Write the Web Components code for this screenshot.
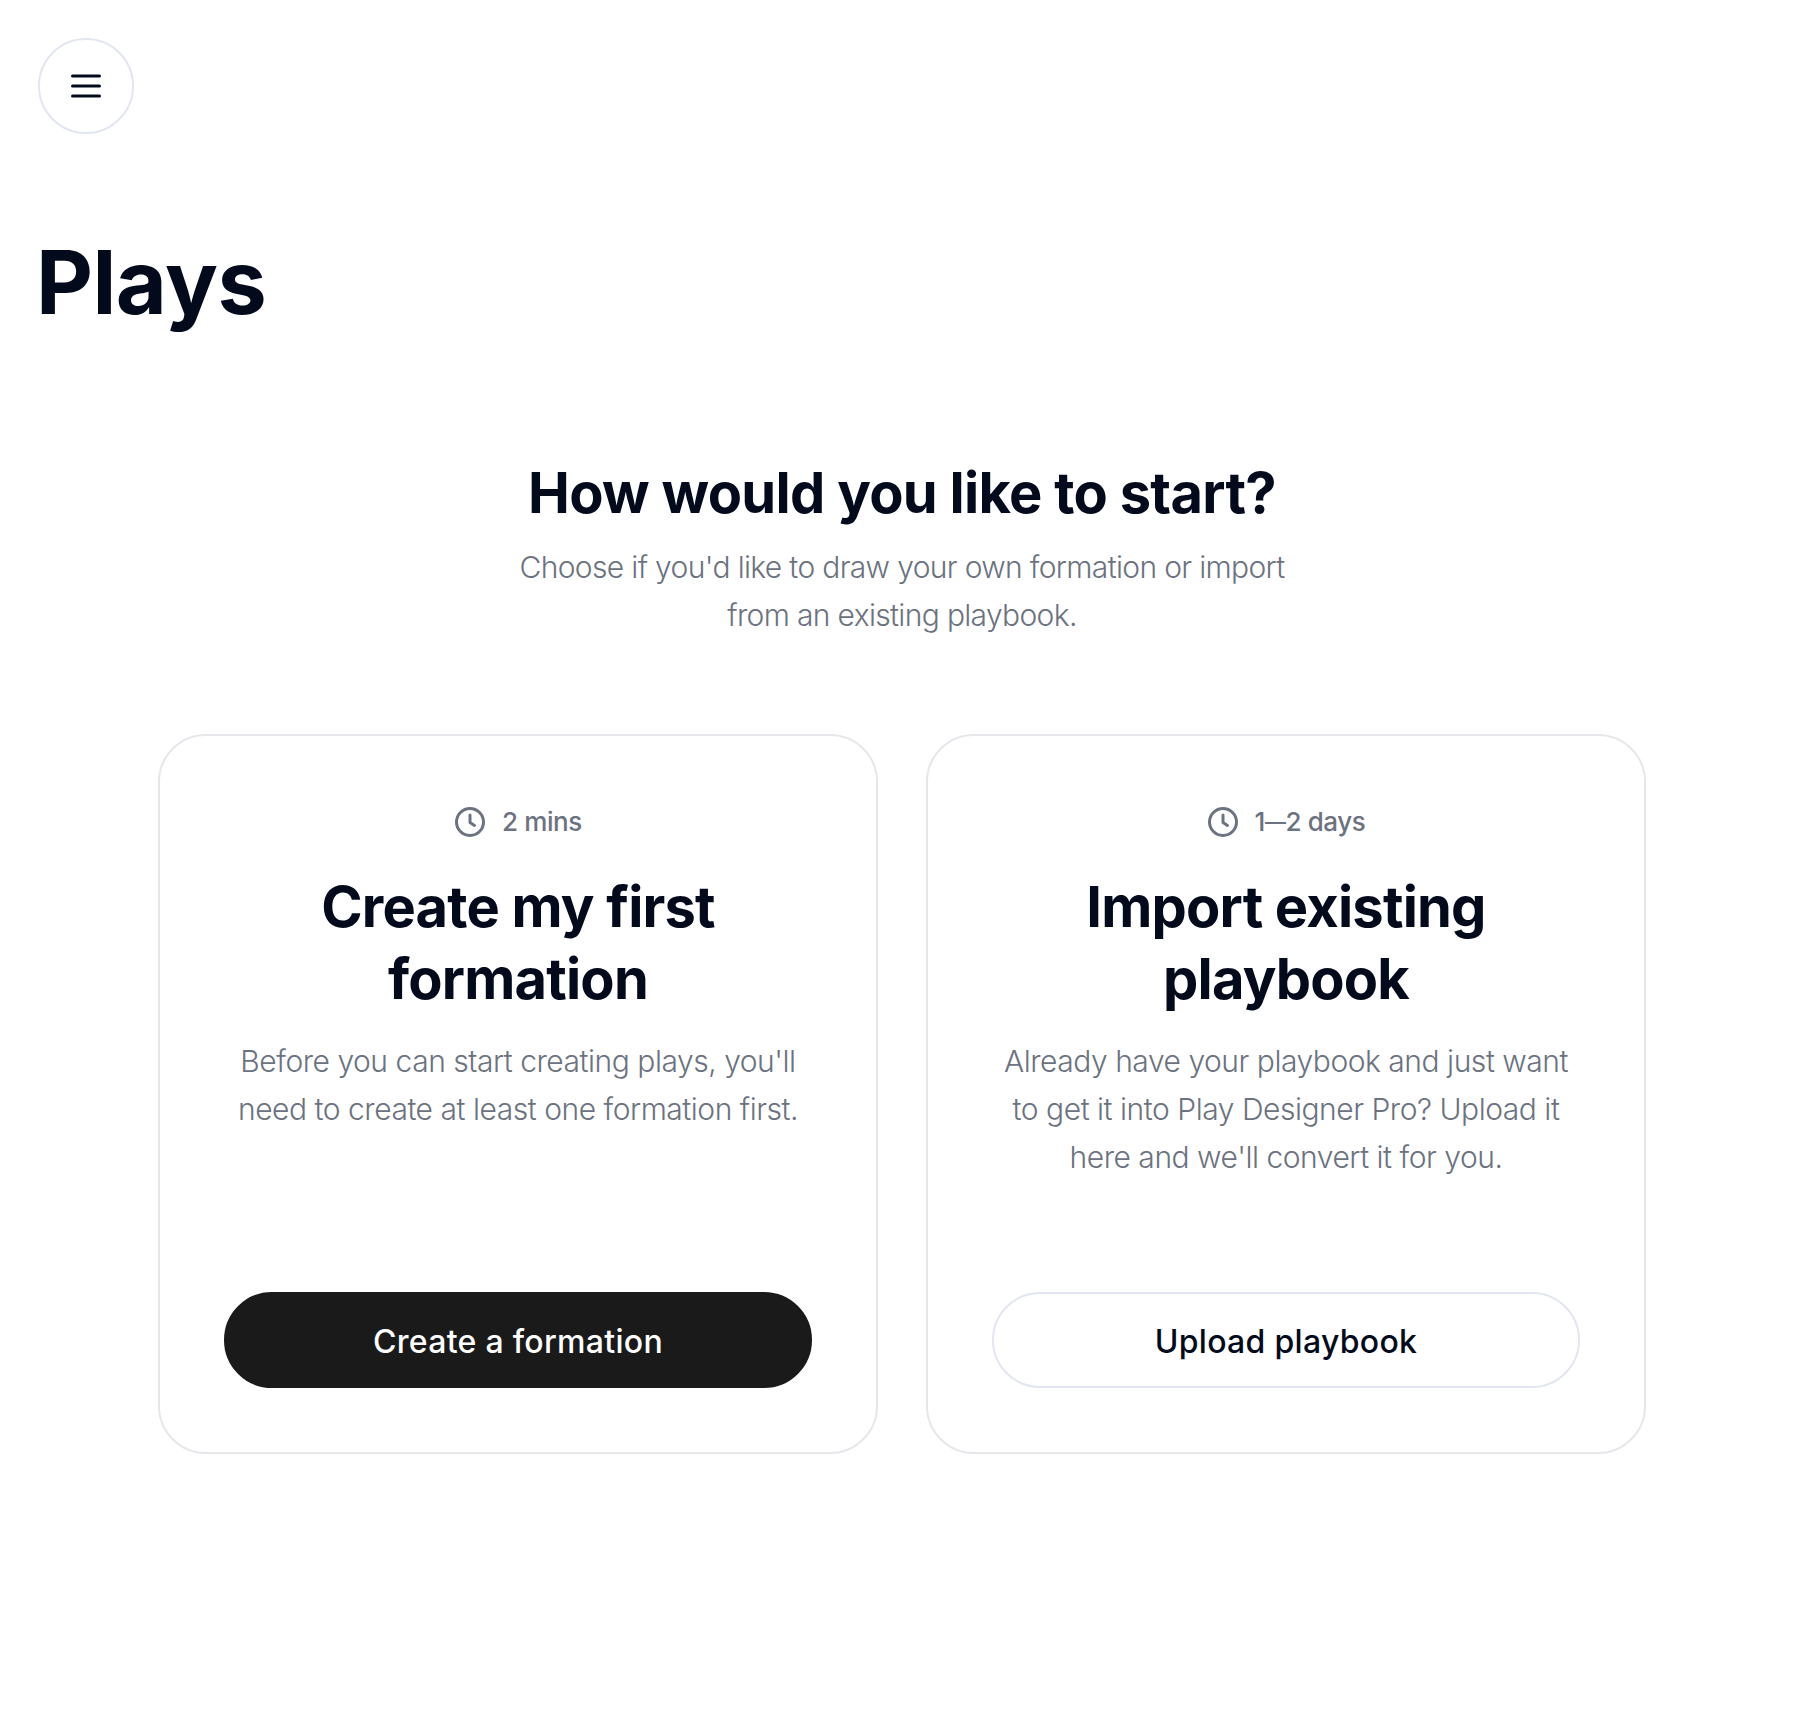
<!DOCTYPE html>
<html lang="en">
<head>
<meta charset="utf-8">
<title>Plays</title>
<style>
  html, body { margin: 0; background: #fff; }
  body { font-family: Inter, "Liberation Sans", sans-serif; color: #030a1c; }
</style>
</head>
<body>
<plays-page>
  <start-card time="2 mins" heading="Create my first formation" action="Create a formation" primary>
    Before you can start creating plays, you'll need to create at least one formation first.
  </start-card>
  <start-card time="1—2 days" heading="Import existing playbook" action="Upload playbook">
    Already have your playbook and just want to get it into Play Designer Pro? Upload it here and we'll convert it for you.
  </start-card>
</plays-page>

<script>
class MenuButton extends HTMLElement {
    constructor() {
        super();
        this.attachShadow({ mode: 'open' });
        this.shadowRoot.innerHTML = `
            <style>
                :host { display: block; width: 96px; height: 96px; }
                button {
                    width: 100%;
                    height: 100%;
                    padding: 0;
                    display: flex;
                    align-items: center;
                    justify-content: center;
                    background: #fff;
                    border: 2px solid #e2e6f0;
                    border-radius: 50%;
                    box-sizing: border-box;
                }
                svg { display: block; }
            </style>
            <button aria-label="Menu">
                <svg width="32" height="24" viewBox="0 0 32 24" fill="none" stroke="#030a1c" stroke-width="3.2" stroke-linecap="round">
                    <path d="M2.600 2h26.800M2.600 12h26.800M2.600 22h26.800"/>
                </svg>
            </button>
        `;
    }
}

class StartCard extends HTMLElement {
    constructor() {
        super();
        this.attachShadow({ mode: 'open' });
    }

    connectedCallback() {
        const primary = this.hasAttribute('primary');
        // the dash in the reference is shorter than a full size em dash
        const time = this.getAttribute('time').replace('—', '<span class="dash">—</span>');
        this.shadowRoot.innerHTML = `
            <style>
                :host {
                    display: flex;
                    flex-direction: column;
                    align-items: center;
                    box-sizing: border-box;
                    width: 720px;
                    height: 720px;
                    padding: 70px 64px 64px;
                    background: #fff;
                    border: 2px solid #e5e7eb;
                    border-radius: 48px;
                    text-align: center;
                }
                .time {
                    display: flex;
                    align-items: center;
                    gap: 16px;
                    height: 32px;
                    font-size: 26px;
                    line-height: 32px;
                    font-weight: 450;
                    letter-spacing: -0.4px;
                    color: #6b7280;
                }
                .time svg { display: block; }
                .dash { font-size: 21px; vertical-align: 2px; }
                h2 {
                    margin: 33px 0 0;
                    font-size: 56px;
                    line-height: 72px;
                    font-weight: 700;
                    letter-spacing: -0.8px;
                    color: #030a1c;
                }
                p {
                    margin: 22px 0 0;
                    font-size: 30px;
                    line-height: 48px;
                    font-weight: 350;
                    letter-spacing: -0.47px;
                    color: #6b7280;
                }
                button {
                    margin-top: auto;
                    width: 100%;
                    height: 96px;
                    flex: none;
                    padding: 3px 0 0;
                    font: inherit;
                    font-size: 32px;
                    font-weight: 450;
                    letter-spacing: 0.3px;
                    border-radius: 48px;
                    box-sizing: border-box;
                    background: ${primary ? '#1a1a1a' : '#fff'};
                    color: ${primary ? '#fff' : '#030a1c'};
                    border: 2px solid ${primary ? '#1a1a1a' : '#e2e6f0'};
                }
            </style>
            <div class="time">
                <svg width="32" height="32" viewBox="0 0 32 32" fill="none" stroke="#6b7280" stroke-width="3" stroke-linecap="round" stroke-linejoin="round">
                    <circle cx="16" cy="16" r="13.5"/>
                    <path d="M16 9v7.5l4.500 3"/>
                </svg>
                <span>${time}</span>
            </div>
            <h2>${this.getAttribute('heading')}</h2>
            <p><slot></slot></p>
            <button>${this.getAttribute('action')}</button>
        `;
    }
}

class PlaysPage extends HTMLElement {
    constructor() {
        super();
        this.attachShadow({ mode: 'open' });
        this.shadowRoot.innerHTML = `
            <style>
                :host { display: block; box-sizing: border-box; min-height: 1734px; padding: 38px; }
                h1 {
                    margin: 92px 0 0 -2px;
                    font-size: 88px;
                    line-height: 112px;
                    font-weight: 700;
                    letter-spacing: -0.5px;
                    color: #030a1c;
                }
                .intro { margin-top: 119px; text-align: center; }
                .intro h2 {
                    margin: 0;
                    font-size: 56px;
                    line-height: 72px;
                    font-weight: 700;
                    letter-spacing: -0.7px;
                    color: #030a1c;
                }
                .intro p {
                    margin: 14px auto 0;
                    width: 800px;
                    font-size: 30px;
                    line-height: 48px;
                    font-weight: 350;
                    letter-spacing: -0.66px;
                    color: #6b7280;
                }
                .cards { display: flex; justify-content: center; gap: 48px; margin-top: 95px; }
            </style>
            <menu-button></menu-button>
            <h1>Plays</h1>
            <div class="intro">
                <h2>How would you like to start?</h2>
                <p>Choose if you'd like to draw your own formation or import<br>from an existing playbook.</p>
            </div>
            <div class="cards"><slot></slot></div>
        `;
    }
}

customElements.define('menu-button', MenuButton);
customElements.define('start-card', StartCard);
customElements.define('plays-page', PlaysPage);
</script>
</body>
</html>
